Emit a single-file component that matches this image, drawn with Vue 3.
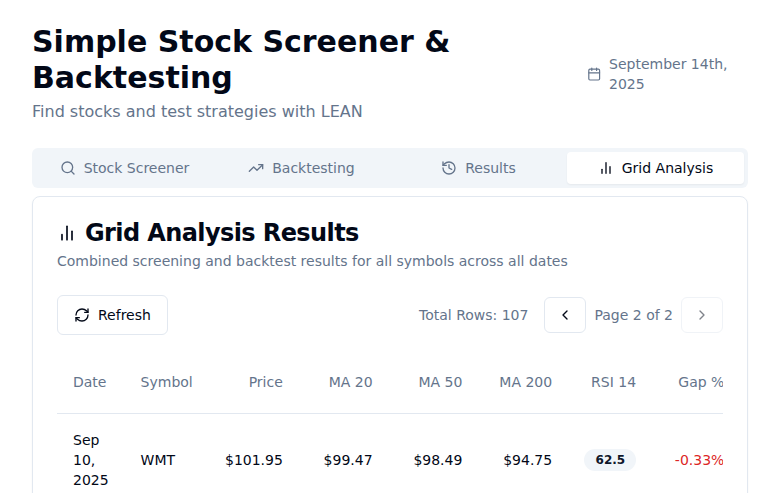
<script setup>
const icons = {
  search: ['M19 11a8 8 0 1 1-16 0 8 8 0 0 1 16 0', 'm21 21-4.3-4.3'],
  trend: ['M22 7 13.5 15.5 8.5 10.5 2 17', 'M16 7h6v6'],
  history: ['M3 12a9 9 0 1 0 9-9 9.75 9.75 0 0 0-6.74 2.74L3 8', 'M3 3v5h5', 'M12 7v5l4 2'],
  bars: ['M18 20V10', 'M12 20V4', 'M6 20v-6'],
}
const tabs = [
  { label: 'Stock Screener', icon: 'search' },
  { label: 'Backtesting', icon: 'trend' },
  { label: 'Results', icon: 'history' },
  { label: 'Grid Analysis', icon: 'bars', active: true },
]
const columns = ['Date', 'Symbol', 'Price', 'MA 20', 'MA 50', 'MA 200', 'RSI 14', 'Gap %']
const rows = [
  { date: 'Sep 10, 2025', symbol: 'WMT', prices: ['$101.95', '$99.47', '$98.49', '$94.75'], rsi: '62.5', gap: '-0.33%' },
]
</script>

<template>
  <main class="page">
    <header class="header">
      <div>
        <h1>Simple Stock Screener &amp; Backtesting</h1>
        <p class="subtitle">Find stocks and test strategies with LEAN</p>
      </div>
      <div class="today">
        <svg class="icon calendar" viewBox="0 0 24 24">
          <path d="M8 2v4M16 2v4M3 10h18" />
          <rect x="3" y="4" width="18" height="18" rx="2" />
        </svg>
        <span>September 14th, 2025</span>
      </div>
    </header>

    <nav class="tabs">
      <button v-for="tab in tabs" :key="tab.label" class="tab" :class="{ active: tab.active }">
        <svg class="icon" viewBox="0 0 24 24">
          <path v-for="d in icons[tab.icon]" :key="d" :d="d" />
        </svg>
        {{ tab.label }}
      </button>
    </nav>

    <section class="card">
      <h2>
        <svg class="icon large" viewBox="0 0 24 24">
          <path v-for="d in icons.bars" :key="d" :d="d" />
        </svg>
        Grid Analysis Results
      </h2>
      <p class="description">Combined screening and backtest results for all symbols across all dates</p>

      <div class="toolbar">
        <button class="btn refresh">
          <svg class="icon" viewBox="0 0 24 24">
            <path d="M3 12a9 9 0 0 1 9-9 9.75 9.75 0 0 1 6.74 2.74L21 8" />
            <path d="M21 3v5h-5" />
            <path d="M21 12a9 9 0 0 1-9 9 9.75 9.75 0 0 1-6.74-2.74L3 16" />
            <path d="M8 16H3v5" />
          </svg>
          Refresh
        </button>
        <div class="pager">
          <span class="total">Total Rows: 107</span>
          <button class="btn step" aria-label="Previous page">
            <svg class="icon" viewBox="0 0 24 24"><path d="m15 18-6-6 6-6" /></svg>
          </button>
          <span>Page 2 of 2</span>
          <button class="btn step" disabled aria-label="Next page">
            <svg class="icon" viewBox="0 0 24 24"><path d="m9 18 6-6-6-6" /></svg>
          </button>
        </div>
      </div>

      <div class="table-wrap">
        <table>
          <colgroup>
            <col class="c-date" /><col class="c-symbol" />
            <col v-for="n in 4" :key="n" class="c-price" />
            <col class="c-rsi" /><col class="c-gap" />
          </colgroup>
          <thead>
            <tr><th v-for="c in columns" :key="c">{{ c }}</th></tr>
          </thead>
          <tbody>
            <tr v-for="r in rows" :key="r.date + r.symbol">
              <td>{{ r.date }}</td>
              <td>{{ r.symbol }}</td>
              <td v-for="p in r.prices" :key="p">{{ p }}</td>
              <td><span class="badge">{{ r.rsi }}</span></td>
              <td class="loss">{{ r.gap }}</td>
            </tr>
          </tbody>
        </table>
      </div>
    </section>
  </main>
</template>

<style>
html,
body {
  margin: 0;
  background: #fff;
  overflow: hidden;
}
</style>

<style scoped>
* {
  box-sizing: border-box;
}
.page {
  height: 493px;
  overflow: hidden;
  padding: 24px 32px 0;
  font: 14px/20px "DejaVu Sans", sans-serif;
  color: #020817;
}
h1,
h2,
p {
  margin: 0;
}
.header {
  display: flex;
  align-items: center;
  justify-content: space-between;
  height: 100px;
  margin-bottom: 24px;
}
h1 {
  width: 500px;
  font-size: 30px;
  line-height: 36px;
  font-weight: 700;
}
.subtitle {
  margin-top: 4px;
  font-size: 16px;
  line-height: 24px;
  color: #64748b;
}
.today {
  display: flex;
  align-items: center;
  gap: 8px;
  width: 161.4px;
  color: #64748b;
}
.icon {
  flex: none;
  width: 16px;
  height: 16px;
  fill: none;
  stroke: currentColor;
  stroke-width: 2;
  stroke-linecap: round;
  stroke-linejoin: round;
}
.calendar {
  width: 14.4px;
}
.large {
  width: 20px;
  height: 20px;
}
button {
  font: inherit;
  color: inherit;
}
.tabs {
  display: grid;
  grid-template-columns: repeat(4, 1fr);
  height: 40px;
  padding: 4px;
  border-radius: 6px;
  background: #f1f5f9;
  color: #64748b;
}
.tab {
  display: flex;
  align-items: center;
  justify-content: center;
  gap: 8px;
  padding: 0;
  border: 0;
  border-radius: 4px;
  background: transparent;
}
.tab.active {
  background: #fff;
  color: #020817;
  box-shadow: 0 1px 2px rgb(0 0 0 / 5%);
}
.card {
  height: 400px;
  margin-top: 8px;
  padding: 24px;
  border: 1px solid #e2e8f0;
  border-radius: 8px;
  box-shadow: 0 1px 2px rgb(0 0 0 / 5%);
}
h2 {
  display: flex;
  align-items: center;
  gap: 8px;
  font-size: 24px;
  line-height: 24px;
  font-weight: 700;
  letter-spacing: -0.6px;
}
.description {
  margin: 6px 0 24px;
  color: #64748b;
}
.toolbar {
  display: flex;
  align-items: center;
  justify-content: space-between;
  margin-bottom: 16px;
}
.btn {
  display: flex;
  align-items: center;
  justify-content: center;
  gap: 8px;
  height: 40px;
  padding: 0 16px;
  border: 1px solid #e2e8f0;
  border-radius: 6px;
  background: #fff;
}
.btn.step {
  width: 42px;
  height: 36px;
  padding: 0;
}
.btn:disabled {
  opacity: 0.5;
}
.pager {
  display: flex;
  align-items: center;
  gap: 8px;
  color: #64748b;
}
.pager .btn {
  color: #020817;
}
.total {
  margin-right: 8px;
}
.table-wrap {
  overflow: hidden;
}
table {
  width: 683.4px;
  table-layout: fixed;
  border-collapse: collapse;
}
.c-date {
  width: 67.6px;
}
.c-symbol {
  width: 84.4px;
}
.c-price {
  width: 89.8px;
}
.c-rsi {
  width: 83.9px;
}
th,
td {
  padding: 16px;
  text-align: right;
  white-space: nowrap;
}
th {
  height: 62px;
  padding: 0 16px;
  font-weight: 400;
  color: #64748b;
}
thead tr {
  border-bottom: 1px solid #e2e8f0;
}
th:nth-child(-n + 2),
td:nth-child(-n + 2) {
  text-align: left;
}
td:first-child {
  white-space: normal;
}
.badge {
  display: inline-block;
  padding: 3px 11px 3px 11.4px;
  border-radius: 11px;
  background: #f1f5f9;
  font-size: 12px;
  line-height: 16px;
  font-weight: 700;
  color: #0f172a;
}
.loss {
  color: #dc2626;
}
</style>
